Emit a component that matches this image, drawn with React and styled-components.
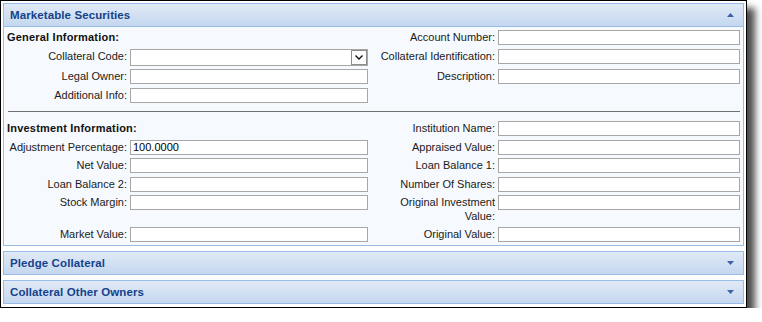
import React from 'react';
import styled, { createGlobalStyle } from 'styled-components';

const GlobalStyle = createGlobalStyle`
  html, body { margin: 0; padding: 0; background: #fff; }
  body {
    font-family: "Liberation Sans", Arial, sans-serif;
    font-size: 11px;
    color: #1b1b1b;
  }
`;

const Frame = styled.div`
  box-sizing: border-box;
  width: 747px;
  border: 1px solid #000;
  padding: 2px 2px 3px 2px;
  background: #fff;
  box-shadow: 8px 8px 7px rgba(0, 0, 0, 0.7);
  display: flex;
  flex-direction: column;
  gap: 5px;
`;

const Panel = styled.section`
  display: flex;
  flex-direction: column;
`;

const Header = styled.div`
  box-sizing: border-box;
  height: 24px;
  border: 1px solid #99bbe8;
  background: linear-gradient(#e1eaf6, #c4d7ef);
  display: flex;
  align-items: center;
  justify-content: space-between;
  padding: 0 9px 0 6px;
`;

const Title = styled.span`
  font-weight: bold;
  font-size: 11.5px;
  color: #15428b;
  letter-spacing: 0.1px;
`;

const Body = styled.div`
  border: 1px solid #99bbe8;
  border-top: none;
  background: #f6f9fd;
  padding: 3px 3px 3.5px 0;
`;

const FieldGrid = styled.div`
  display: grid;
  grid-template-columns: 126px 238px 130px 242px;
  row-gap: 3.5px;
  align-items: start;
`;

const SectionHeading = styled.div`
  grid-column: 1 / span 2;
  font-weight: bold;
  font-size: 11px;
  line-height: 15px;
  padding-left: 3px;
  letter-spacing: 0.2px;
  color: #111;
`;

const Label = styled.label`
  text-align: right;
  padding: 1px 3px 0 0;
  line-height: 13.5px;
  color: #1b1b1b;
`;

const TextInput = styled.input`
  box-sizing: border-box;
  display: block;
  width: 100%;
  height: 15px;
  margin: 0;
  border: 1px solid #a7a7a7;
  padding: 0 2px;
  background: #fff;
  font-family: "Liberation Sans", Arial, sans-serif;
  font-size: 11px;
  color: #000;
  outline: none;
`;

const Combo = styled.div`
  box-sizing: border-box;
  display: flex;
  width: 100%;
  height: 17px;
  border: 1px solid #a7a7a7;
  background: #fff;
`;

const ComboField = styled.div`
  flex: 1;
`;

const ComboButton = styled.div`
  box-sizing: border-box;
  width: 16px;
  height: 15px;
  border: 1px solid #8c8c8c;
  background: #fdfdfd;
  display: flex;
  align-items: center;
  justify-content: center;
`;

const Separator = styled.hr`
  border: none;
  border-top: 1px solid #707070;
  height: 0;
  margin: 8.5px 0 9px 4px;
`;

const Arrow = ({ up }) => (
  <svg width="7" height="4" viewBox="0 0 7 4">
    <path d={up ? 'M3.5 0 L7 4 H0 Z' : 'M0 0 H7 L3.5 4 Z'} fill="#3b62a6" />
  </svg>
);

const Chevron = () => (
  <svg width="8" height="5" viewBox="0 0 8 5">
    <polyline points="0.5,0.5 4,4 7.5,0.5" fill="none" stroke="#111" strokeWidth="1.4" />
  </svg>
);

const Field = ({ label, value }) => (
  <>
    <Label>{label}</Label>
    <TextInput defaultValue={value || ''} />
  </>
);

const CollapsedPanel = ({ title }) => (
  <Panel>
    <Header>
      <Title>{title}</Title>
      <Arrow />
    </Header>
  </Panel>
);

export default function App() {
  return (
    <>
      <GlobalStyle />
      <Frame>
        <Panel>
          <Header>
            <Title>Marketable Securities</Title>
            <Arrow up />
          </Header>
          <Body>
            <FieldGrid>
              <SectionHeading>General Information:</SectionHeading>
              <Field label="Account Number:" />
              <Label>Collateral Code:</Label>
              <Combo>
                <ComboField />
                <ComboButton>
                  <Chevron />
                </ComboButton>
              </Combo>
              <Field label="Collateral Identification:" />
              <Field label="Legal Owner:" />
              <Field label="Description:" />
              <Field label="Additional Info:" />
            </FieldGrid>
            <Separator />
            <FieldGrid>
              <SectionHeading>Investment Information:</SectionHeading>
              <Field label="Institution Name:" />
              <Field label="Adjustment Percentage:" value="100.0000" />
              <Field label="Appraised Value:" />
              <Field label="Net Value:" />
              <Field label="Loan Balance 1:" />
              <Field label="Loan Balance 2:" />
              <Field label="Number Of Shares:" />
              <Field label="Stock Margin:" />
              <Field label="Original Investment Value:" />
              <Field label="Market Value:" />
              <Field label="Original Value:" />
            </FieldGrid>
          </Body>
        </Panel>
        <CollapsedPanel title="Pledge Collateral" />
        <CollapsedPanel title="Collateral Other Owners" />
      </Frame>
    </>
  );
}
